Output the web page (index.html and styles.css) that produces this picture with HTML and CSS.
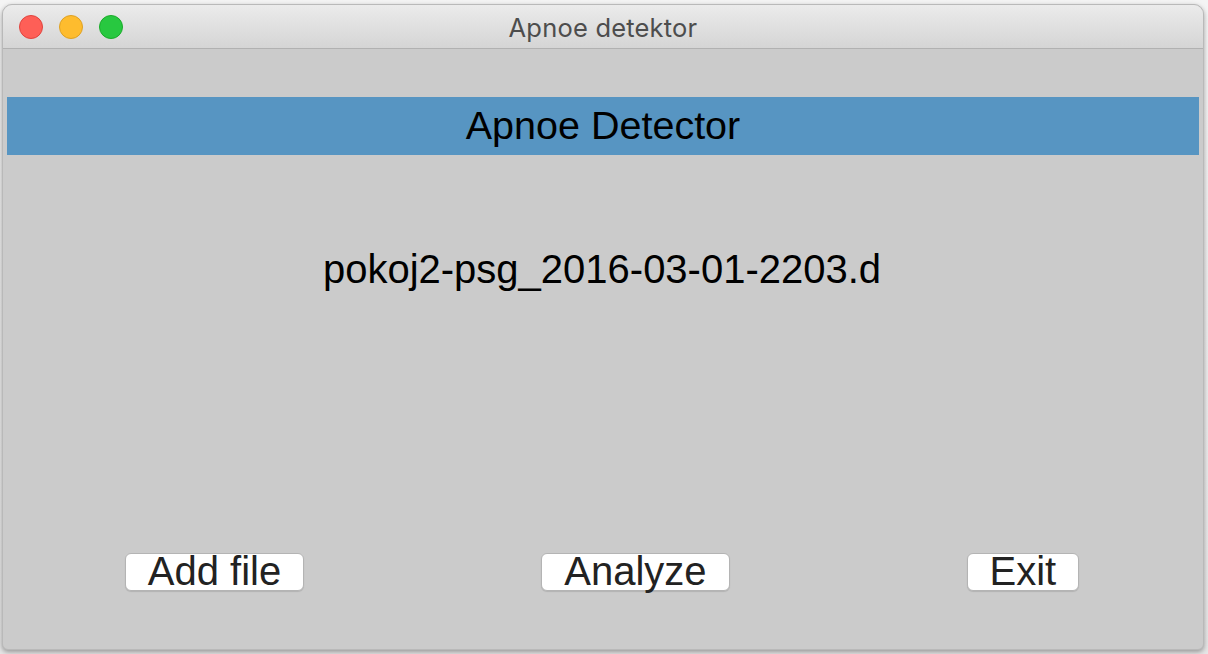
FILE: index.html
```html
<!DOCTYPE html>
<html>
<head>
<meta charset="utf-8">
<title>Apnoe detektor</title>
<link rel="stylesheet" href="styles.css">
</head>
<body>
<div class="window">
  <div class="titlebar">
    <div class="lights">
      <span class="light red"></span>
      <span class="light yellow"></span>
      <span class="light green"></span>
    </div>
    <div class="title">Apnoe detektor</div>
    <div class="spacer"></div>
  </div>
  <div class="content">
    <div class="banner">Apnoe Detector</div>
    <div class="filename">pokoj2-psg_2016-03-01-2203.d</div>
    <div class="buttons">
      <button class="btn">Add file</button>
      <button class="btn">Analyze</button>
      <button class="btn">Exit</button>
    </div>
  </div>
</div>
</body>
</html>
```

FILE: styles.css
```css
html, body {
  margin: 0;
  padding: 0;
}
body {
  width: 1208px;
  height: 654px;
  background: linear-gradient(#f4f4f4, #e6e6e6);
  overflow: hidden;
}
.window {
  box-sizing: border-box;
  margin: 4px 0 0 2px;
  width: 1202px;
  height: 646px;
  border: 1px solid #b9b9b9;
  border-radius: 10px 10px 6px 6px;
  overflow: hidden;
  box-shadow: 0 2px 5px rgba(0, 0, 0, 0.35);
  display: flex;
  flex-direction: column;
  background: #cbcbcb;
}
.titlebar {
  height: 43px;
  flex: none;
  background: linear-gradient(#ebebeb, #d5d5d5);
  border-bottom: 1px solid #b1b1b1;
  display: grid;
  grid-template-columns: 1fr auto 1fr;
  align-items: center;
}
.lights {
  display: flex;
  gap: 16px;
  padding-left: 16px;
}
.light {
  box-sizing: border-box;
  width: 24px;
  height: 24px;
  border-radius: 50%;
}
.red { background: #fe5f57; border: 1px solid #e0443e; }
.yellow { background: #febc2e; border: 1px solid #dea123; }
.green { background: #28c840; border: 1px solid #1aab29; }
.title {
  font-family: Inter, "Open Sans", sans-serif;
  font-size: 25.5px;
  letter-spacing: 0.2px;
  color: #4d4d4d;
  line-height: 43px;
  padding-top: 1px;
}
.content {
  flex: 1;
  display: flex;
  flex-direction: column;
  padding: 48px 6px 58px 4px;
  font-family: "Liberation Sans", Arial, sans-serif;
}
.banner {
  background: #5795c2;
  height: 58px;
  margin-right: -2px;
  line-height: 56px;
  text-align: center;
  font-size: 39.5px;
  color: #000;
}
.filename {
  margin-top: 90px;
  text-align: center;
  font-size: 40px;
  line-height: 48px;
  color: #000;
}
.buttons {
  margin-top: auto;
  display: flex;
  justify-content: center;
  gap: 237px;
}
.btn {
  box-sizing: border-box;
  height: 38px;
  padding: 0 22px 4px 22px;
  font-family: "Liberation Sans", Arial, sans-serif;
  font-size: 40px;
  line-height: 34px;
  color: #222;
  background: #fff;
  border: 1px solid #b4b4b4;
  border-radius: 6px;
  box-shadow: 0 1px 1px rgba(0, 0, 0, 0.12);
}
```
